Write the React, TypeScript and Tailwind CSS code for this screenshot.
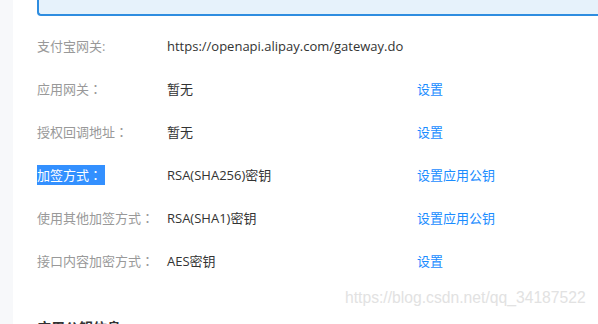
const rows: { label: string; value: string; action?: string; selected?: boolean }[] = [
  { label: "支付宝网关:", value: "https://openapi.alipay.com/gateway.do" },
  { label: "应用网关：", value: "暂无", action: "设置" },
  { label: "授权回调地址：", value: "暂无", action: "设置" },
  { label: "加签方式：", value: "RSA(SHA256)密钥", action: "设置应用公钥", selected: true },
  { label: "使用其他加签方式：", value: "RSA(SHA1)密钥", action: "设置应用公钥" },
  { label: "接口内容加密方式：", value: "AES密钥", action: "设置" },
];

function Label({ text }: { text: string }) {
  // full-width colon sits centred in its box, like the original font
  if (!text.endsWith("：")) return <>{text}</>;
  return (
    <>
      {text.slice(0, -1)}
      <span style={{ fontFamily: '"Noto Sans CJK TC", sans-serif' }}>：</span>
    </>
  );
}

export default function App() {
  return (
    <div
      className="relative flex h-[324px] w-[598px] overflow-hidden bg-white text-[13px]"
      style={{ fontFamily: '"Segoe UI", "Open Sans", "Noto Sans CJK SC", sans-serif' }}
    >
      <div className="w-[13px] shrink-0 bg-[#f7f8fa]" />

      <div className="flex-1 pl-6">
        <div className="h-4 rounded-bl-[4px] border-b-2 border-l-2 border-[#2e8de0] bg-[#e6f2fb]" />

        <div className="mt-[20px] flex flex-col">
          {rows.map((row) => (
            <div key={row.label} className="flex h-[43px] items-start leading-[20px]">
              <div className="w-[130px] shrink-0">
                <span
                  className={
                    row.selected
                      ? "inline-block bg-[#3390ff] pr-[3px] text-white"
                      : "text-[#999999]"
                  }
                >
                  <Label text={row.label} />
                </span>
              </div>
              <div className="w-[250px] shrink-0 text-[#333333]">{row.value}</div>
              {row.action && <a className="text-[#1a8cff]">{row.action}</a>}
            </div>
          ))}
        </div>

        <div className="mt-[23px] text-[14px] font-bold text-[#333333]">应用公钥信息</div>
      </div>

      <div
        className="pointer-events-none absolute left-[345px] top-[286px] text-[15.7px] text-[#e2e2e2]"
        style={{ fontFamily: '"Liberation Sans", Arial, sans-serif' }}
      >
        https://blog.csdn.net/qq_34187522
      </div>
    </div>
  );
}
